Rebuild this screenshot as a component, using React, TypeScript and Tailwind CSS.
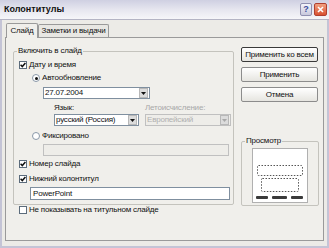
import React from 'react';

const Check = ({ checked }: { checked?: boolean }) => (
  <span className="w-[8px] h-[8px] border border-[#5c6c7c] bg-white flex items-center justify-center shrink-0">
    {checked && (
      <svg width="6" height="6" viewBox="0 0 6 6">
        <path d="M0.6 2.8 L2.3 4.6 L5.4 1" stroke="#111" strokeWidth="1.5" fill="none" />
      </svg>
    )}
  </span>
);

const Radio = ({ checked }: { checked?: boolean }) => (
  <span className="w-[8px] h-[8px] rounded-full border border-[#8a98a8] bg-white flex items-center justify-center shrink-0">
    {checked && <span className="w-[3px] h-[3px] rounded-full bg-[#111]" />}
  </span>
);

const Arrow = ({ disabled }: { disabled?: boolean }) => (
  <span className="w-[9px] h-[10px] mr-[1px] bg-[#dcdcdc] border border-[#b8b8b8] flex items-center justify-center shrink-0">
    <svg width="5" height="3" viewBox="0 0 5 3">
      <path d="M0 0 H5 L2.5 3 Z" fill={disabled ? '#a8a8a8' : '#111'} />
    </svg>
  </span>
);

const Button = ({ children, main }: { children: React.ReactNode; main?: boolean }) => (
  <div
    className={`h-[15px] w-[77px] rounded-[2px] border flex items-center justify-center bg-gradient-to-b from-white to-[#e6e5e0] ${
      main ? 'border-[#3a3a3a]' : 'border-[#8c8c8c]'
    }`}
  >
    {children}
  </div>
);

const App: React.FC = () => {
  return (
    <div className="w-[329px] h-[248px] flex flex-col bg-[#ecebe7] text-[8px] tracking-[-0.2px] whitespace-nowrap leading-none text-[#111] font-['Liberation_Sans',Arial,sans-serif] overflow-hidden">
      {/* title bar */}
      <div className="h-[20px] shrink-0 flex items-center justify-between pl-[4px] pr-[2px] bg-gradient-to-b from-[#cfd0e2] via-[#e6e6ef] to-[#f6f6f9] border-b border-[#b4b4c4]">
        <span className="text-[9px] tracking-normal font-bold">Колонтитулы</span>
        <div className="flex gap-[2px]">
          <div className="w-[12px] h-[13px] rounded-[2px] border border-[#9090b0] bg-gradient-to-b from-[#f4f4fa] to-[#c8c8dc] flex items-center justify-center text-[9px] font-bold text-[#3c4c9c]">
            ?
          </div>
          <div className="w-[13px] h-[13px] rounded-[2px] border border-[#b04030] bg-gradient-to-b from-[#f0a080] to-[#d85030] flex items-center justify-center">
            <svg width="7" height="7" viewBox="0 0 7 7">
              <path d="M1 1 L6 6 M6 1 L1 6" stroke="#fff" strokeWidth="1.6" />
            </svg>
          </div>
        </div>
      </div>

      {/* body */}
      <div className="flex-1 flex flex-col border-x-2 border-b-2 border-[#c4c4d6] px-[3px] pt-[2px]">
        {/* tabs */}
        <div className="h-[15px] flex items-end pl-[1px]">
          <div className="relative top-[1px] z-10 h-[15px] w-[32px] border border-b-0 border-[#9a9a9a] rounded-t-[2px] bg-[#f0efeb] flex items-center justify-center">
            Слайд
          </div>
          <div className="h-[13px] w-[71px] border border-b-0 border-[#9a9a9a] rounded-t-[2px] bg-[#e8e7e3] flex items-center justify-center">
            Заметки и выдачи
          </div>
        </div>

        {/* panel */}
        <div className="h-[204px] flex border border-[#9a9a9a] bg-[#f0efeb] pt-[9px] pl-[7px]">
          {/* left column */}
          <div className="w-[221px] pt-[4px] flex flex-col">
            <div className="relative h-[154px] border border-[#c4c3bd] rounded-[2px] flex flex-col">
              <span className="absolute -top-[5px] left-[3px] px-[1px] bg-[#f0efeb]">Включить в слайд</span>

              <div className="mt-[7px] h-[12px] pl-[5px] flex items-center gap-[2px]">
                <Check checked />
                <span>Дату и время</span>
              </div>
              <div className="mt-[1px] h-[12px] pl-[18px] flex items-center gap-[2px]">
                <Radio checked />
                <span>Автообновление</span>
              </div>
              <div className="mt-[3px] ml-[29px] w-[107px] h-[12px] border border-[#7f8f9f] bg-white flex items-center">
                <span className="flex-1 pl-[1px]">27.07.2004</span>
                <Arrow />
              </div>
              <div className="mt-[4px] h-[10px] flex items-center">
                <span className="ml-[40px] w-[91px]">Язык:</span>
                <span className="text-[#a8a8a8]">Летоисчисление:</span>
              </div>
              <div className="mt-[1px] flex">
                <div className="ml-[40px] w-[85px] h-[12px] border border-[#7f8f9f] bg-white flex items-center">
                  <span className="flex-1 pl-[1px]">русский (Россия)</span>
                  <Arrow />
                </div>
                <div className="ml-[6px] w-[86px] h-[12px] border border-[#c0c0c0] bg-[#eeede9] flex items-center text-[#b0b0b0]">
                  <span className="flex-1 pl-[1px]">Европейский</span>
                  <Arrow disabled />
                </div>
              </div>
              <div className="mt-[4px] h-[12px] pl-[18px] flex items-center gap-[2px]">
                <Radio />
                <span>Фиксировано</span>
              </div>
              <div className="mt-[2px] ml-[29px] w-[186px] h-[12px] border border-[#c0c0c0] bg-[#eeede9]" />
              <div className="mt-[2px] h-[12px] pl-[5px] flex items-center gap-[2px]">
                <Check checked />
                <span>Номер слайда</span>
              </div>
              <div className="mt-[3px] h-[12px] pl-[5px] flex items-center gap-[2px]">
                <Check checked />
                <span>Нижний колонтитул</span>
              </div>
              <div className="mt-[2px] ml-[16px] w-[200px] h-[13px] border border-[#7f8f9f] bg-white flex items-center pl-[2px]">
                PowerPoint
              </div>
            </div>
            <div className="h-[10px] pl-[6px] flex items-center gap-[2px]">
              <Check />
              <span>Не показывать на титульном слайде</span>
            </div>
          </div>

          {/* right column */}
          <div className="ml-[7px] w-[78px] flex flex-col">
            <div className="flex flex-col gap-[5px]">
              <Button main>Применить ко всем</Button>
              <Button>Применить</Button>
              <Button>Отмена</Button>
            </div>
            <div className="relative mt-[39px] h-[65px] border border-[#c4c3bd] rounded-[2px]">
              <span className="absolute -top-[5px] left-[3px] px-[1px] bg-[#f0efeb]">Просмотр</span>
              <div className="mt-[6px] ml-[10px] w-[56px] h-[55px] bg-white border border-[#b0b0b0]">
                <svg width="54" height="53" viewBox="0 0 54 53">
                  <rect x="4.5" y="16.5" width="45" height="10" rx="1" fill="none" stroke="#555" strokeDasharray="1.5 1.5" />
                  <rect x="8.5" y="29.5" width="37" height="13" rx="1" fill="none" stroke="#555" strokeDasharray="1.5 1.5" />
                  <rect x="3" y="47" width="12" height="3" rx="1" fill="#3a3a3a" />
                  <rect x="19" y="47" width="15" height="3" rx="1" fill="#3a3a3a" />
                  <rect x="38" y="47" width="12" height="3" rx="1" fill="#3a3a3a" />
                </svg>
              </div>
            </div>
          </div>
        </div>
      </div>
    </div>
  );
};

export default App;
